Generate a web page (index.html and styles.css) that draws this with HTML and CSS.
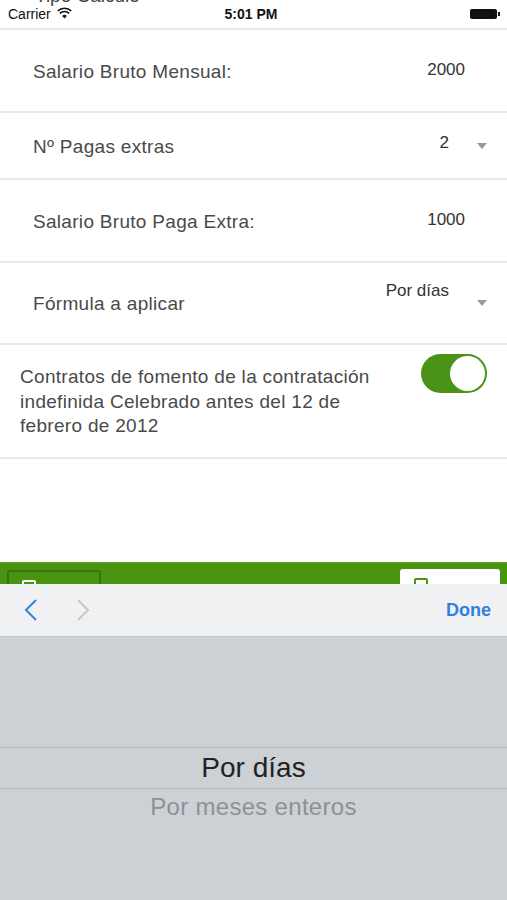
FILE: index.html
```html
<!DOCTYPE html>
<html lang="es">
<head>
    <meta charset="UTF-8">
    <meta name="viewport" content="width=device-width, initial-scale=1.0">
    <title>Tipo Cálculo</title>
    <link rel="stylesheet" href="styles.css">
</head>
<body>
    <div class="screen">
        <div class="statusbar">
            <span class="behind-title">Tipo Cálculo</span>
            <div class="status-left">
                <span>Carrier</span>
                <svg class="wifi" width="15" height="12" viewBox="0 0 15 12">
                    <path d="M7.5 11.5 L5.2 8.9 A3.4 3.4 0 0 1 9.8 8.9 Z" fill="#111"/>
                    <path d="M2.9 6.4 A6.6 6.6 0 0 1 12.1 6.4" fill="none" stroke="#111" stroke-width="1.6"/>
                    <path d="M0.8 3.9 A9.6 9.6 0 0 1 14.2 3.9" fill="none" stroke="#111" stroke-width="1.6"/>
                </svg>
            </div>
            <span class="clock">5:01 PM</span>
            <div class="battery"><span class="battery-body"></span><span class="battery-cap"></span></div>
        </div>

        <div class="row">
            <span class="label">Salario Bruto Mensual:</span>
            <span class="value input-value">2000</span>
        </div>
        <div class="row short">
            <span class="label">Nº Pagas extras</span>
            <span class="value select-value">2</span>
            <span class="caret"></span>
        </div>
        <div class="row">
            <span class="label">Salario Bruto Paga Extra:</span>
            <span class="value input-value">1000</span>
        </div>
        <div class="row">
            <span class="label">Fórmula a aplicar</span>
            <span class="value select-value raised">Por días</span>
            <span class="caret"></span>
        </div>
        <div class="row switch-row">
            <span class="switch-label">Contratos de fomento de la contratación indefinida Celebrado antes del 12 de febrero de 2012</span>
            <span class="switch"><span class="knob"></span></span>
        </div>

        <div class="spacer"></div>

        <div class="greenbar">
            <span class="gb-button outline"><span class="gb-icon"></span></span>
            <span class="gb-button filled"><span class="gb-icon"></span></span>
        </div>

        <div class="toolbar">
            <svg class="chev" width="14" height="24" viewBox="0 0 14 24">
                <path d="M12 2 L2 12 L12 22" fill="none" stroke="#3183e4" stroke-width="2"/>
            </svg>
            <svg class="chev next" width="14" height="24" viewBox="0 0 14 24">
                <path d="M2 2 L12 12 L2 22" fill="none" stroke="#c7c7c9" stroke-width="2"/>
            </svg>
            <span class="done">Done</span>
        </div>

        <div class="picker">
            <div class="picker-selected">Por días</div>
            <div class="picker-option">Por meses enteros</div>
        </div>
    </div>
</body>
</html>
```

FILE: styles.css
```css
body {
    margin: 0;
    font-family: "Liberation Sans", Arial, sans-serif;
    background-color: #fff;
}
.screen {
    width: 507px;
    height: 900px;
    display: flex;
    flex-direction: column;
    overflow: hidden;
}
.statusbar {
    position: relative;
    height: 28px;
    flex: none;
    display: flex;
    align-items: center;
    justify-content: space-between;
    padding: 0 7px 0 8px;
    border-bottom: 2px solid #e8e8e8;
    font-size: 14px;
    color: #111;
}
.behind-title {
    position: absolute;
    left: 35px;
    top: -15px;
    font-size: 19px;
    color: #444;
}
.status-left {
    display: flex;
    align-items: center;
    gap: 6px;
    width: 120px;
}
.wifi {
    margin-top: -3px;
}
.clock {
    font-weight: bold;
    margin-left: -6px;
}
.battery {
    width: 120px;
    display: flex;
    justify-content: flex-end;
    align-items: center;
}
.battery-body {
    width: 27px;
    height: 10px;
    background-color: #111;
    border-radius: 2px;
}
.battery-cap {
    width: 2px;
    height: 4px;
    background-color: #111;
    margin-left: 1px;
}
.row {
    height: 81px;
    flex: none;
    display: flex;
    align-items: center;
    padding-left: 33px;
    border-bottom: 2px solid #e8e8e8;
}
.row.short {
    height: 65px;
}
.row:nth-of-type(5) {
    height: 80px;
}
.label {
    flex: 1;
    font-size: 19px;
    letter-spacing: 0.3px;
    color: #4a4a4a;
    padding-top: 2px;
}
.value {
    font-size: 17px;
    color: #333;
}
.input-value {
    margin-right: 42px;
    margin-bottom: 2px;
}
.select-value {
    margin-bottom: 5px;
}
.select-value.raised {
    margin-bottom: 24px;
}
.caret {
    width: 0;
    height: 0;
    border-left: 5.5px solid transparent;
    border-right: 5.5px solid transparent;
    border-top: 6px solid #999;
    margin: 0 20px 0 28px;
}
.switch-row {
    height: 112px;
    align-items: flex-start;
    padding-left: 20px;
}
.switch-label {
    width: 366px;
    font-size: 19px;
    letter-spacing: 0.3px;
    line-height: 24.5px;
    color: #4a4a4a;
    padding-top: 20px;
}
.switch {
    margin: 9px 0 0 35px;
    width: 66px;
    height: 39px;
    border-radius: 20px;
    background-color: #4b9318;
    display: flex;
    justify-content: flex-end;
    align-items: center;
    padding: 0 2px;
    box-sizing: border-box;
}
.knob {
    width: 35px;
    height: 35px;
    border-radius: 50%;
    background-color: #fff;
}
.spacer {
    height: 103px;
    flex: none;
}
.greenbar {
    height: 22px;
    flex: none;
    background-color: #4a9310;
    border-top: 1px solid #5aa31f;
    box-sizing: border-box;
    display: flex;
    justify-content: space-between;
    align-items: flex-start;
    padding: 7px 7px 0;
    overflow: hidden;
}
.gb-button {
    width: 94px;
    height: 30px;
    border-radius: 3px;
    box-sizing: border-box;
    padding: 8px 0 0 13px;
}
.gb-button.outline {
    border: 2px solid #377409;
}
.gb-button.filled {
    width: 100px;
    background-color: #fff;
    margin-top: -1px;
    padding: 9px 0 0 14px;
}
.gb-icon {
    display: block;
    width: 14px;
    height: 14px;
    border: 2px solid #fff;
    border-radius: 2px;
    box-sizing: border-box;
}
.filled .gb-icon {
    border-color: #4a9310;
}
.toolbar {
    height: 52px;
    flex: none;
    background-color: #f0f1f2;
    border-bottom: 1px solid #c3c7cb;
    display: flex;
    align-items: center;
    padding: 0 16px 0 24px;
}
.chev.next {
    margin-left: 38px;
}
.done {
    margin-left: auto;
    font-size: 18px;
    font-weight: bold;
    color: #2f7fe3;
}
.picker {
    flex: 1;
    background-color: #cbd1d5;
    display: flex;
    flex-direction: column;
    align-items: center;
    padding-top: 110px;
}
.picker-selected {
    width: 100%;
    height: 42px;
    box-sizing: border-box;
    border-top: 1.5px solid #b3b9be;
    border-bottom: 1.5px solid #b3b9be;
    text-align: center;
    font-size: 28px;
    line-height: 40px;
    color: #222;
}
.picker-option {
    font-size: 24px;
    letter-spacing: 0.3px;
    color: #8d9196;
    margin-top: 4px;
}
```
